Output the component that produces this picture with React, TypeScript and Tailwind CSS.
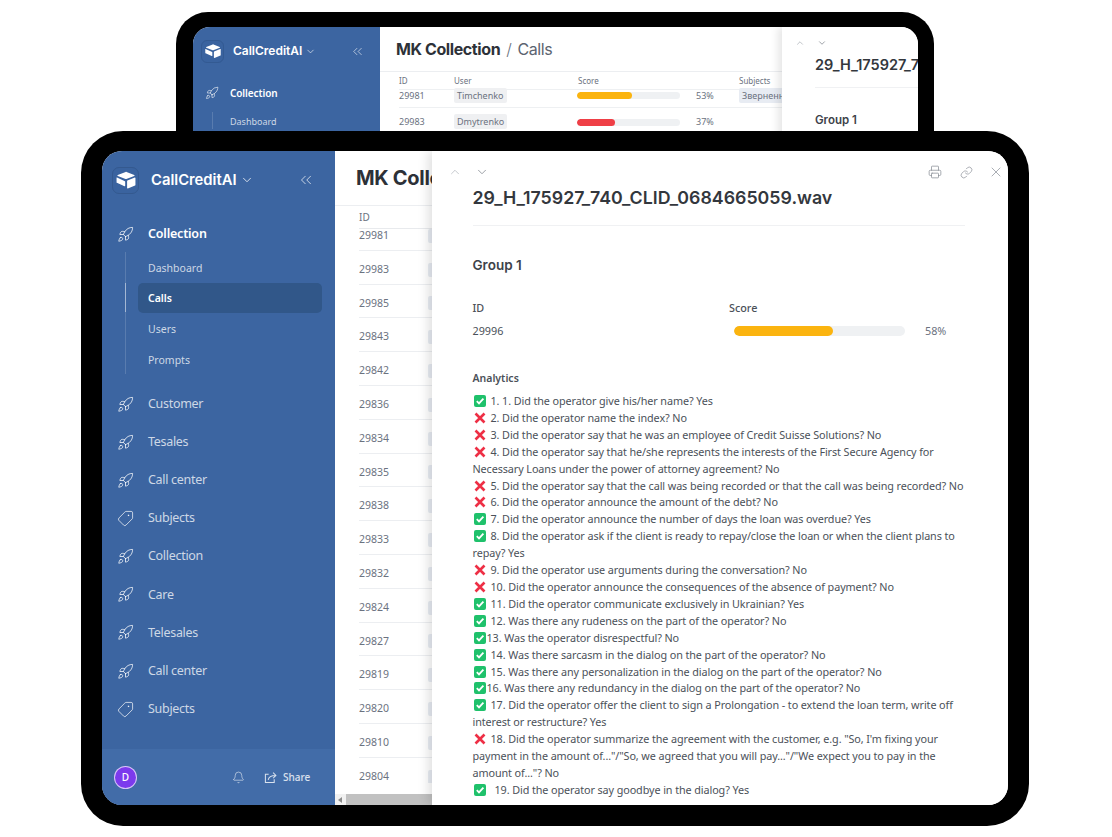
import { Bell, ChevronDown, ChevronUp, ChevronsLeft, Link, Printer, Rocket, Tag, X } from "lucide-react";

function Logo({ size }: { size: number }) {
    return (
        <svg width={size} height={size} viewBox="0 0 24 24" fill="#fff">
            <path d="M12.6 3.2 21 6.6c.5.2.5.7 0 .9l-8.6 3.4c-.3.1-.6.1-.9 0L3 7.5c-.5-.2-.5-.7 0-.9l8.6-3.4c.3-.1.7-.1 1 0Z" />
            <path d="M13.5 12.6 21.6 9.4c.4-.1.7.1.7.5v7.6c0 .3-.2.5-.4.6l-7.9 3.1c-.4.1-.8-.1-.8-.5V13.200c0-.3.1-.5.3-.6Z" />
            <path d="M2.2 9.200 10.800 13.300c.2.1.3.300.3.5v4.400c0 .4-.4.700-.8.500L2.100 15.100c-.3-.1-.4-.3-.4-.5V9.600c0-.3.300-.500.500-.4Z" />
        </svg>
    );
}

function CheckMark() {
    return (
        <svg width="12" height="12" viewBox="0 0 12 12" className="inline-block align-[-2px]">
            <rect width="12" height="12" rx="2" fill="#1fc16b" />
            <path d="M2.800 6.200 5 8.400 9.400 3.600" fill="none" stroke="#fff" strokeWidth="1.800" />
        </svg>
    );
}

function CrossMark() {
    return (
        <svg width="12" height="12" viewBox="0 0 12 12" className="inline-block align-[-2px]">
            <path d="M1.500 1.500 10.500 10.500M10.500 1.500 1.500 10.500" fill="none" stroke="#ee2f45" strokeWidth="2.600" />
        </svg>
    );
}

function ShareIcon() {
    return (
        <svg width="13" height="13" viewBox="0 0 14 14" fill="none" stroke="currentColor" strokeWidth="1.100">
            <path d="M5 3.500H1.500v9h9.500V9" />
            <path d="M4.500 9.500C5 6.500 7.500 4.800 12.500 4.800M9.800 1.800l3 3-3 3" />
        </svg>
    );
}

const nav = [
    { label: "Customer", tag: false },
    { label: "Tesales", tag: false },
    { label: "Call center", tag: false },
    { label: "Subjects", tag: true },
    { label: "Collection", tag: false },
    { label: "Care", tag: false },
    { label: "Telesales", tag: false },
    { label: "Call center", tag: false },
    { label: "Subjects", tag: true },
];

const ids = [
    "29981", "29983", "29985", "29843", "29842", "29836", "29834", "29835", "29838",
    "29833", "29832", "29824", "29827", "29819", "29820", "29810", "29804",
];

const answers: { ok: boolean; text: string; gap: string }[] = [
    { ok: true, gap: "ml-[5px]", text: "1. 1. Did the operator give his/her name? Yes" },
    { ok: false, gap: "ml-[5px]", text: "2. Did the operator name the index? No" },
    { ok: false, gap: "ml-[5px]", text: "3. Did the operator say that he was an employee of Credit Suisse Solutions? No" },
    { ok: false, gap: "ml-[5px]", text: "4. Did the operator say that he/she represents the interests of the First Secure Agency for Necessary Loans under the power of attorney agreement? No" },
    { ok: false, gap: "ml-[5px]", text: "5. Did the operator say that the call was being recorded or that the call was being recorded? No" },
    { ok: false, gap: "ml-[5px]", text: "6. Did the operator announce the amount of the debt? No" },
    { ok: true, gap: "ml-[5px]", text: "7. Did the operator announce the number of days the loan was overdue? Yes" },
    { ok: true, gap: "ml-[5px]", text: "8. Did the operator ask if the client is ready to repay/close the loan or when the client plans to repay? Yes" },
    { ok: false, gap: "ml-[5px]", text: "9. Did the operator use arguments during the conversation? No" },
    { ok: false, gap: "ml-[5px]", text: "10. Did the operator announce the consequences of the absence of payment? No" },
    { ok: true, gap: "ml-[5px]", text: "11. Did the operator communicate exclusively in Ukrainian? Yes" },
    { ok: true, gap: "ml-[5px]", text: "12. Was there any rudeness on the part of the operator? No" },
    { ok: true, gap: "ml-[1px]", text: "13. Was the operator disrespectful? No" },
    { ok: true, gap: "ml-[5px]", text: "14. Was there sarcasm in the dialog on the part of the operator? No" },
    { ok: true, gap: "ml-[5px]", text: "15. Was there any personalization in the dialog on the part of the operator? No" },
    { ok: true, gap: "ml-[1px]", text: "16. Was there any redundancy in the dialog on the part of the operator? No" },
    { ok: true, gap: "ml-[5px]", text: "17. Did the operator offer the client to sign a Prolongation - to extend the loan term, write off interest or restructure? Yes" },
    { ok: false, gap: "ml-[5px]", text: '18. Did the operator summarize the agreement with the customer, e.g. "So, I\'m fixing your payment in the amount of..."/"So, we agreed that you will pay..."/"We expect you to pay in the amount of..."? No' },
    { ok: true, gap: "ml-[9px]", text: "19. Did the operator say goodbye in the dialog? Yes" },
];

function BackDevice() {
    return (
        <div className="absolute left-[176px] top-[12px] h-[180px] w-[758px] rounded-[32px] bg-black pl-[17px] pr-[16px] pt-[15px]">
            <div className="flex h-[165px] overflow-hidden rounded-t-[17px] bg-white">
                <aside className="flex w-[187px] shrink-0 flex-col bg-[#3c65a1] text-white">
                    <div className="flex h-[48px] items-center pl-[8px]">
                        <div className="flex h-[23px] w-[23px] items-center justify-center rounded-[6px] border border-[#335a92] bg-[#3a639f]">
                            <Logo size={18} />
                        </div>
                        <span className="ml-[9px] text-[12px] font-semibold [font-family:Inter,sans-serif]">CallCreditAI</span>
                        <ChevronDown size={11} className="ml-[3px]" strokeWidth={1.3} />
                        <ChevronsLeft size={15} className="ml-[34px] text-white/85" strokeWidth={1.1} />
                    </div>
                    <div className="mt-[8px] flex h-[20px] items-center pl-[12px]">
                        <Rocket size={14} strokeWidth={1.2} className="text-white/85" />
                        <span className="ml-[11px] text-[10px] font-semibold tracking-[-0.1px]">Collection</span>
                    </div>
                    <div className="ml-[19px] mt-[9px] border-l border-white/15 pl-[17px] pt-[3px] text-[9px] text-white/75">Dashboard</div>
                </aside>
                <main className="relative min-w-0 flex-1">
                    <div className="flex h-[44px] items-center pl-[16px] text-[16px] tracking-[-0.4px] [font-family:Inter,sans-serif]">
                        <span className="font-bold text-[#2d3138]">MK Collection</span>
                        <span className="mx-[6px] font-light text-[#6b7280]">/</span>
                        <span className="text-[#5b6470]">Calls</span>
                    </div>
                    <div className="border-t border-[#eceef1] px-[19px] text-[8px] text-[#6b7280]">
                        <div className="flex h-[18px] items-center border-b border-[#eef0f2]">
                            <span className="w-[55px]">ID</span>
                            <span className="w-[124px]">User</span>
                            <span className="w-[161px]">Score</span>
                            <span>Subjects</span>
                        </div>
                        <div className="flex h-[18px] items-center whitespace-nowrap border-b border-[#eef0f2] pb-[6px] text-[9px]">
                            <span className="w-[55px] shrink-0">29981</span>
                            <span className="w-[123px] shrink-0">
                                <span className="rounded-[2px] bg-[#eff0f2] px-[3px] py-[1px]">Timchenko</span>
                            </span>
                            <Bar pct={53} color="bg-[#fbb40f]" />
                            <span className="ml-[16px] w-[43px] shrink-0">53%</span>
                            <span className="rounded-[2px] bg-[#e8ecf3] px-[3px] py-[1px]">Зверненн</span>
                        </div>
                        <div className="flex h-[28px] items-center border-b border-[#eef0f2] pt-[1px] text-[9px]">
                            <span className="w-[55px] shrink-0">29983</span>
                            <span className="w-[123px] shrink-0">
                                <span className="rounded-[2px] bg-[#eff0f2] px-[3px] py-[1px]">Dmytrenko</span>
                            </span>
                            <Bar pct={37} color="bg-[#ef3f46]" />
                            <span className="ml-[16px]">37%</span>
                        </div>
                    </div>
                    <div className="absolute bottom-0 right-0 top-0 w-[136px] overflow-hidden whitespace-nowrap bg-white pl-[33px] shadow-[-4px_0_8px_rgba(0,0,0,0.1)] [font-family:Inter,sans-serif]">
                        <div className="absolute left-[13px] top-[11px] flex gap-[12px] text-[#8b9098]">
                            <ChevronUp size={10} className="text-[#b5b9bf]" />
                            <ChevronDown size={10} />
                        </div>
                        <div className="pt-[28px] text-[14.500px] font-semibold leading-[20px] text-[#33373d]">29_H_175927_740_CLID</div>
                        <div className="mt-[12px] border-t border-[#f0f1f3] pt-[24px] text-[11.500px] font-semibold leading-[16px] text-[#3d4249]">Group 1</div>
                    </div>
                </main>
            </div>
        </div>
    );
}

function Bar({ pct, color }: { pct: number; color: string }) {
    return (
        <div className="h-[7px] w-[103px] shrink-0 overflow-hidden rounded-full bg-[#eff1f3]">
            <div className={`h-full rounded-full ${color}`} style={{ width: `${pct}%` }} />
        </div>
    );
}

function Sidebar() {
    return (
        <aside className="flex w-[233px] shrink-0 flex-col bg-[#3c65a1] text-white">
            <div className="flex h-[58px] items-center pl-[10px]">
                <div className="flex h-[27px] w-[27px] items-center justify-center rounded-[7px] border border-[#34598f] bg-[#3a639f]">
                    <Logo size={22} />
                </div>
                <span className="ml-[12px] text-[14.800px] font-semibold [font-family:Inter,sans-serif]">CallCreditAI</span>
                <ChevronDown size={14} strokeWidth={1.3} className="ml-[3px]" />
                <ChevronsLeft size={18} strokeWidth={1.1} className="ml-[43px] text-white/85" />
            </div>
            <div className="mt-[5px] flex h-[38px] items-center pl-[15px] pt-[2px]">
                <Rocket size={17} strokeWidth={1.2} className="text-white/90" />
                <span className="ml-[14px] text-[12.500px] font-semibold tracking-[-0.2px]">Collection</span>
            </div>
            <div className="relative ml-[23px] border-l border-white/15">
                <div className="absolute -left-px top-[31px] h-[29px] w-px bg-white/45" />
                <div className="flex h-[30.700px] items-center pl-[22px] pt-[4px] text-[10.500px] text-white/75">Dashboard</div>
                <div className="ml-[12px] flex h-[30px] w-[184px] items-center rounded-[5px] bg-[#315789] pl-[10px] pt-[2px] text-[10.500px] font-semibold text-white">Calls</div>
                <div className="flex h-[31px] items-center pl-[22px] pt-[4px] text-[10.500px] text-white/75">Users</div>
                <div className="flex h-[30.700px] items-center pl-[22px] pt-[4px] text-[10.500px] text-white/75">Prompts</div>
            </div>
            <nav className="mt-[10px]">
                {nav.map((item, i) => (
                    <div key={i} className="flex h-[38.100px] items-center pl-[15px] pt-[2px] text-white/75">
                        {item.tag ? (
                            <Tag size={17} strokeWidth={1.1} className="-scale-x-100 text-white/90" />
                        ) : (
                            <Rocket size={17} strokeWidth={1.2} className="text-white/90" />
                        )}
                        <span className="ml-[14px] text-[12.500px] tracking-[-0.3px]">{item.label}</span>
                    </div>
                ))}
            </nav>
            <div className="mt-auto flex h-[56px] items-center bg-[#426ca8] pl-[12px] text-white/80">
                <div className="flex h-[23px] w-[23px] items-center justify-center rounded-full border border-white/70 bg-[#7c3aed] text-[10px] font-medium text-white">D</div>
                <Bell size={13} strokeWidth={1.2} className="ml-[95px]" />
                <span className="ml-[19px]">
                    <ShareIcon />
                </span>
                <span className="ml-[6px] text-[10px] font-medium">Share</span>
            </div>
        </aside>
    );
}

function CallsTable() {
    return (
        <main className="relative min-w-0 flex-1 overflow-hidden">
            <div className="flex h-[54px] items-center whitespace-nowrap pl-[21px] text-[20px] font-bold tracking-[-0.3px] text-[#2d3138] [font-family:Inter,sans-serif]">MK Collection</div>
            <div className="border-t border-[#eceef1] pl-[24px] text-[10.500px] text-[#6b7280]">
                <div className="flex h-[23px] items-center border-b border-[#e8eaed] text-[10px]">ID</div>
                <div className="-mt-[12px] h-[566px] overflow-hidden">
                    {ids.map((id) => (
                        <div key={id} className="flex h-[33.800px] items-center border-b border-[#eceef1] pt-[5px]">
                            <span className="w-[69px] shrink-0">{id}</span>
                            <span className="h-[14px] w-[30px] shrink-0 rounded-[2px] bg-[#e8ecf3]" />
                        </div>
                    ))}
                </div>
            </div>
            <div className="absolute inset-x-0 bottom-0 flex h-[11px] items-center bg-[#f1f1f1]">
                <span className="ml-[3px] h-0 w-0 border-y-[3px] border-r-[4px] border-y-transparent border-r-[#8a8a8a]" />
                <span className="ml-[4px] h-full flex-1 bg-[#c1c1c1]" />
            </div>
        </main>
    );
}

function Detail() {
    return (
        <section className="relative z-10 w-[576px] shrink-0 overflow-hidden bg-white pl-[40.500px] pr-[43px] text-[#4b5159] shadow-[-4px_0_10px_rgba(0,0,0,0.12)]">
            <div className="absolute left-[16px] right-[4px] top-[13px] flex items-center text-[#7d838b]">
                <ChevronUp size={14} strokeWidth={1.3} className="text-[#b5b9bf]" />
                <ChevronDown size={14} strokeWidth={1.3} className="ml-[13px]" />
                <Printer size={14} strokeWidth={1.3} className="ml-auto text-[#8b9098]" />
                <Link size={13} strokeWidth={1.3} className="ml-[18px] text-[#8b9098]" />
                <X size={16} strokeWidth={1.1} className="ml-[15px] text-[#8b9098]" />
            </div>
            <h2 className="border-b border-[#f0f1f3] pb-[16px] pt-[35px] text-[17.800px] font-semibold leading-[23px] text-[#33373d] [font-family:Inter,sans-serif]">29_H_175927_740_CLID_0684665059.wav</h2>
            <h3 className="mt-[29px] text-[13.500px] font-semibold leading-[20px] text-[#3d4249] [font-family:Inter,sans-serif]">Group 1</h3>
            <div className="mt-[23px] flex text-[10.800px]">
                <div className="w-[256.500px]">
                    <div className="font-medium leading-[20px]">ID</div>
                    <div className="mt-[3px] leading-[20px]">29996</div>
                </div>
                <div>
                    <div className="font-medium leading-[20px]">Score</div>
                    <div className="mt-[3px] flex h-[20px] items-center pl-[5px]">
                        <div className="h-[10px] w-[171px] overflow-hidden rounded-full bg-[#eff1f3]">
                            <div className="h-full w-[58%] rounded-full bg-[#fbb40f]" />
                        </div>
                        <span className="ml-[20px] text-[#6b7280]">58%</span>
                    </div>
                </div>
            </div>
            <div className="mt-[29px] text-[10.500px] font-semibold leading-[16px]">Analytics</div>
            <div className="mt-[7px] text-[10.800px] leading-[16.900px] tracking-[-0.09px]">
                {answers.map((a) => (
                    <div key={a.text}>
                        <span className="ml-[1px]">{a.ok ? <CheckMark /> : <CrossMark />}</span>
                        <span className={a.gap}>{a.text}</span>
                    </div>
                ))}
            </div>
        </section>
    );
}

export default function App() {
    return (
        <div className="relative h-[837px] w-[1112px] overflow-hidden bg-white [font-family:'Noto_Sans',sans-serif]">
            <BackDevice />
            <div className="absolute left-[81px] top-[131px] h-[695px] w-[948px] rounded-[42px] bg-black px-[21px] py-[20px]">
                <div className="flex h-[654px] overflow-hidden rounded-[20px] bg-white">
                    <Sidebar />
                    <CallsTable />
                    <Detail />
                </div>
            </div>
        </div>
    );
}
